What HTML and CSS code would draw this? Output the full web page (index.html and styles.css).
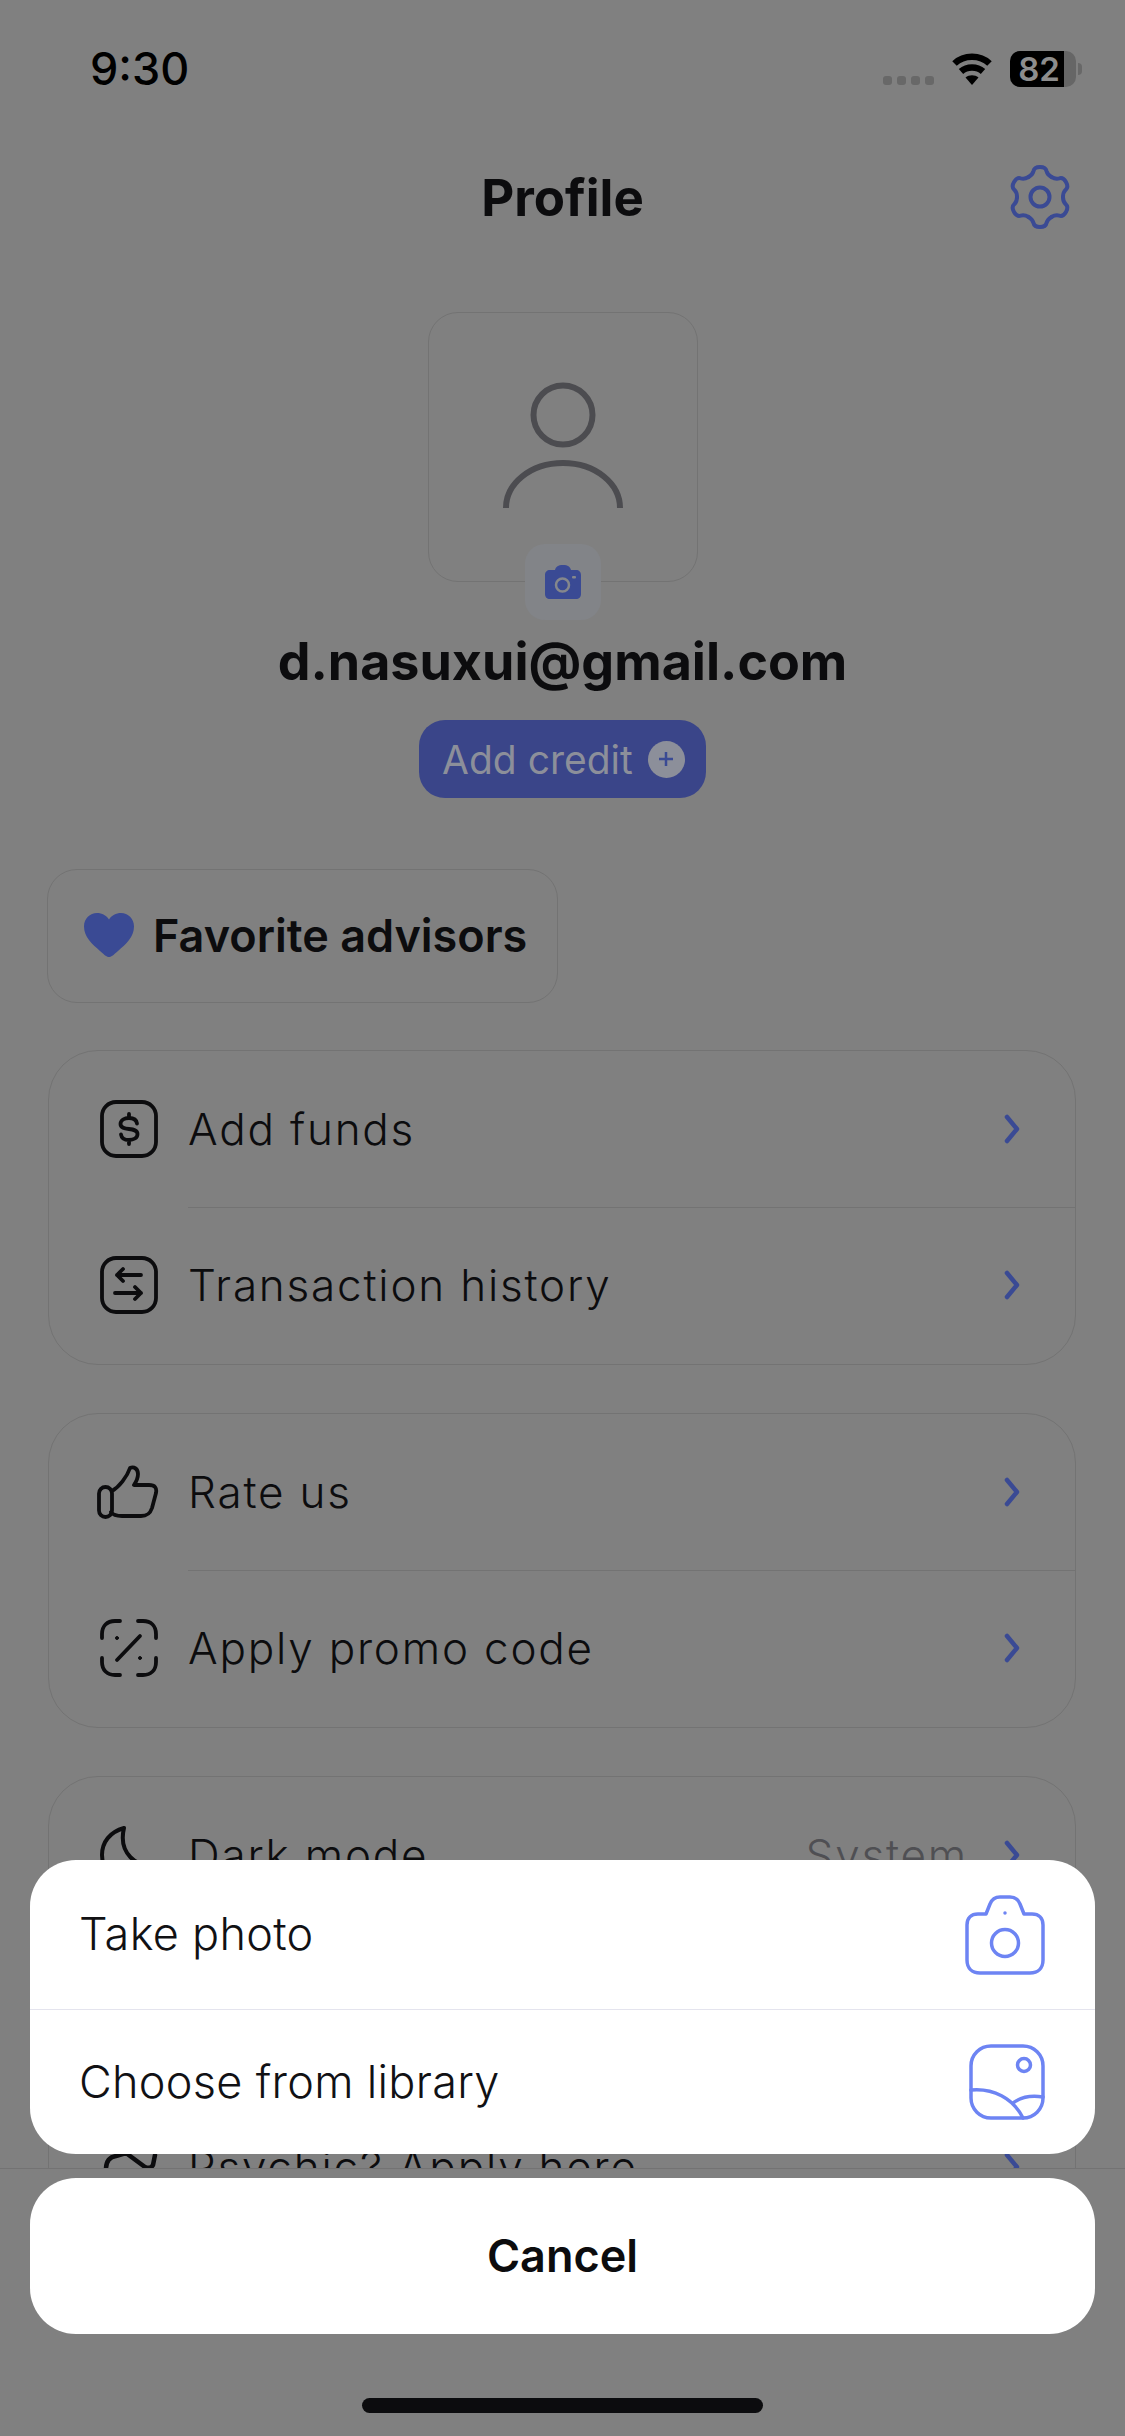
FILE: index.html
```html
<!DOCTYPE html>
<html lang="en">
<head>
    <meta charset="UTF-8">
    <title>Profile</title>
    <link rel="stylesheet" href="styles.css">
</head>
<body>

<div class="screen">
    <div class="main">
        <div class="status">
            <span class="time">9:30</span>
            <div class="status-icons">
                <div class="signal"><i></i><i></i><i></i><i></i></div>
                <svg class="wifi" width="46" height="34" viewBox="0 0 46 34">
                    <path d="M23 34 L16.5 26.5 C20 23.5 26 23.5 29.500 26.500 Z" fill="#000"/>
                    <path d="M12 20.500 C18 15 28 15 34 20.500 M5.500 12.500 C15 3.500 31 3.500 40.500 12.500" fill="none" stroke="#000" stroke-width="6.500"/>
                </svg>
                <div class="battery">
                    <div class="battery-body">
                        <div class="battery-fill"></div>
                        <span>82</span>
                    </div>
                    <div class="battery-nub"></div>
                </div>
            </div>
        </div>

        <div class="header">
            <h1>Profile</h1>
            <svg class="gear" width="64" height="64" viewBox="0 0 64 64" fill="none" stroke="#3a4a94" stroke-width="4" stroke-linecap="round">
                <path id="tooth" d="M20.500 12.100 C24 10.100 25 8 25.500 6 C26 3.500 28 2 32 2 C36 2 38 3.500 38.500 6 C39 8 40 10.100 43.500 12.100"/>
                <use href="#tooth" transform="rotate(60 32 32)"/>
                <use href="#tooth" transform="rotate(120 32 32)"/>
                <use href="#tooth" transform="rotate(180 32 32)"/>
                <use href="#tooth" transform="rotate(240 32 32)"/>
                <use href="#tooth" transform="rotate(300 32 32)"/>
                <circle cx="32" cy="32" r="9.500"/>
            </svg>
        </div>

        <div class="profile">
            <div class="avatar">
                <svg width="126" height="130" viewBox="0 0 126 130" fill="none" stroke="#4c4c50" stroke-width="6">
                    <circle cx="63" cy="35" r="29.500"/>
                    <path d="M6 128 C6 104 30 83 63 83 C96 83 120 104 120 128"/>
                </svg>
                <div class="avatar-badge">
                    <svg width="36" height="34" viewBox="0 0 36 34">
                        <path d="M5 5 H10 C11 1.500 13 0 18 0 C23 0 25 1.500 26 5 H31 C34 5 36 7 36 10 V29 C36 32 34 34 31 34 H5 C2 34 0 32 0 29 V10 C0 7 2 5 5 5 Z" fill="#3a4a94"/>
                        <circle cx="17.500" cy="20" r="6.500" fill="none" stroke="#85878c" stroke-width="2.500"/>
                        <rect x="27" y="11" width="4" height="2.500" rx="1" fill="#85878c"/>
                    </svg>
                </div>
            </div>
            <div class="email">d.nasuxui@gmail.com</div>
            <div class="add-credit">
                <span>Add credit</span>
                <div class="plus">
                    <svg width="16" height="16" viewBox="0 0 16 16" stroke="#3a4a94" stroke-width="2.500"><path d="M8 1 V15 M1 8 H15"/></svg>
                </div>
            </div>
        </div>

        <div class="favorites">
            <svg width="50" height="44" viewBox="0 0 50 44">
                <path d="M25 44 C23 44 21 42.500 16 38 C8 31 0 24 0 13.500 C0 5.500 6 0 13 0 C18 0 22.500 2.500 25 6.500 C27.500 2.500 32 0 37 0 C44 0 50 5.500 50 13.500 C50 24 42 31 34 38 C29 42.500 27 44 25 44 Z" fill="#3a4a94"/>
            </svg>
            <span>Favorite advisors</span>
        </div>

        <div class="group">
            <div class="row">
                <div class="row-icon">
                    <svg width="58" height="58" viewBox="0 0 58 58" fill="none" stroke="#0c0c0e" stroke-width="3.800" stroke-linecap="round">
                        <rect x="2" y="2" width="54" height="54" rx="14"/>
                        <path d="M37 23.500 C36.500 20 33.500 18 29 18 C24.500 18 20.500 20 20.500 24 C20.500 28 24.500 28.500 29 29 C33.500 29.500 37.500 30 37.500 34 C37.500 38 33.500 40 29 40 C24.500 40 21.500 38 21 34.500 M29 14 V18 M29 40 V44"/>
                    </svg>
                </div>
                <span class="row-label">Add funds</span>
                <svg class="chev" width="16" height="30" viewBox="0 0 16 30"><path d="M3 3 L13 15 L3 27" fill="none" stroke="#3a4a94" stroke-width="4.500" stroke-linecap="round" stroke-linejoin="round"/></svg>
            </div>
            <div class="row">
                <div class="row-icon">
                    <svg width="58" height="58" viewBox="0 0 58 58" fill="none" stroke="#0c0c0e" stroke-width="3.800" stroke-linecap="round" stroke-linejoin="round">
                        <rect x="2" y="2" width="54" height="54" rx="14"/>
                        <path d="M41 19 H17 M23 13 L17 19 L23 25 M15 37 H41 M35 31 L41 37 L35 43"/>
                    </svg>
                </div>
                <span class="row-label">Transaction history</span>
                <svg class="chev" width="16" height="30" viewBox="0 0 16 30"><path d="M3 3 L13 15 L3 27" fill="none" stroke="#3a4a94" stroke-width="4.500" stroke-linecap="round" stroke-linejoin="round"/></svg>
            </div>
        </div>

        <div class="group">
            <div class="row">
                <div class="row-icon">
                    <svg class="thumb" width="62" height="54" viewBox="0 0 62 54" fill="none" stroke="#0c0c0e" stroke-width="3.800" stroke-linecap="round" stroke-linejoin="round">
                        <rect x="2" y="22" width="13" height="30" rx="6.500"/>
                        <path d="M15 26 C22 22 30 12 33 3 C37 1 41 4 41 9 C41 13 39 17 37 20 H52 C58 20 60 23 59 28 L55 43 C53 49 50 51 44 51 H25 C20 51 16 50 14 47"/>
                    </svg>
                </div>
                <span class="row-label">Rate us</span>
                <svg class="chev" width="16" height="30" viewBox="0 0 16 30"><path d="M3 3 L13 15 L3 27" fill="none" stroke="#3a4a94" stroke-width="4.500" stroke-linecap="round" stroke-linejoin="round"/></svg>
            </div>
            <div class="row">
                <div class="row-icon">
                    <svg width="58" height="58" viewBox="0 0 58 58" fill="none" stroke="#0c0c0e" stroke-width="3.800" stroke-linecap="round">
                        <path d="M2 19 V15 C2 7 7 2 15 2 H20 M38 2 H43 C51 2 56 7 56 15 V19 M56 39 V43 C56 51 51 56 43 56 H38 M20 56 H15 C7 56 2 51 2 43 V39"/>
                        <path d="M17 41 L40 17"/>
                        <circle cx="17" cy="19" r="1.500" fill="#0c0c0e" stroke-width="1"/>
                        <circle cx="40" cy="39" r="1.500" fill="#0c0c0e" stroke-width="1"/>
                    </svg>
                </div>
                <span class="row-label">Apply promo code</span>
                <svg class="chev" width="16" height="30" viewBox="0 0 16 30"><path d="M3 3 L13 15 L3 27" fill="none" stroke="#3a4a94" stroke-width="4.500" stroke-linecap="round" stroke-linejoin="round"/></svg>
            </div>
        </div>

        <div class="group">
            <div class="row">
                <div class="row-icon">
                    <svg width="58" height="58" viewBox="0 0 58 58" fill="none" stroke="#0c0c0e" stroke-width="4" stroke-linecap="round" stroke-linejoin="round">
                        <path d="M24 2 C10 6 2 16 2 29 C2 45 14 56 29 56 C41 56 51 49 55 38 C37 43 18 27 24 2 Z"/>
                    </svg>
                </div>
                <span class="row-label">Dark mode</span>
                <span class="row-value">System</span>
                <svg class="chev" width="16" height="30" viewBox="0 0 16 30"><path d="M3 3 L13 15 L3 27" fill="none" stroke="#3a4a94" stroke-width="4.500" stroke-linecap="round" stroke-linejoin="round"/></svg>
            </div>
            <div class="row">
                <div class="row-icon"></div>
                <span class="row-label">Notifications</span>
                <svg class="chev" width="16" height="30" viewBox="0 0 16 30"><path d="M3 3 L13 15 L3 27" fill="none" stroke="#3a4a94" stroke-width="4.500" stroke-linecap="round" stroke-linejoin="round"/></svg>
            </div>
            <div class="row">
                <div class="row-icon">
                    <svg width="58" height="52" viewBox="0 0 58 52" fill="none" stroke="#0c0c0e" stroke-width="4.500" stroke-linecap="round" stroke-linejoin="round">
                        <path d="M6 28 C6 20 10 16 16 15 L26 12 L45 26 C49 28 52 26 53 24 L55 14"/>
                    </svg>
                </div>
                <span class="row-label">Psychic? Apply here</span>
                <svg class="chev" width="16" height="30" viewBox="0 0 16 30"><path d="M3 3 L13 15 L3 27" fill="none" stroke="#3a4a94" stroke-width="4.500" stroke-linecap="round" stroke-linejoin="round"/></svg>
            </div>
        </div>
    </div>

    <div class="tabbar">
        <div class="home-bar"></div>
    </div>

    <div class="sheet">
        <div class="sheet-group">
            <div class="sheet-row first">
                <span>Take photo</span>
                <svg width="80" height="80" viewBox="0 0 80 80" fill="none" stroke="#6d84f3" stroke-width="3.500" stroke-linecap="round" stroke-linejoin="round">
                    <path d="M21 19 H13 C6 19 2 23 2 30 V65 C2 73 7 78 15 78 H65 C73 78 78 73 78 65 V30 C78 23 74 19 67 19 H59 L55 9 C53 4 50 2 45 2 H35 C30 2 27 4 25 9 Z"/>
                    <circle cx="40" cy="48" r="13.500"/>
                    <circle cx="40" cy="18" r="1" fill="#6d84f3" stroke-width="1.500"/>
                </svg>
            </div>
            <div class="sheet-row second">
                <span>Choose from library</span>
                <svg width="76" height="76" viewBox="0 0 76 76" fill="none" stroke="#6d84f3" stroke-width="3.500" stroke-linecap="round" stroke-linejoin="round">
                    <rect x="2" y="2" width="72" height="72" rx="20"/>
                    <circle cx="55" cy="21" r="6.500"/>
                    <path d="M2 46 C24 44 44 54 54 74 M44 59 C52 53 62 51 74 53"/>
                </svg>
            </div>
        </div>
        <div class="cancel"><span>Cancel</span></div>
    </div>
</div>

</body>
</html>
```

FILE: styles.css
```css
* {
    box-sizing: border-box;
}

body {
    margin: 0;
    background-color: #808080;
    color: #0c0c0e;
    font-family: Inter, "Liberation Sans", sans-serif;
}

.screen {
    position: relative;
    width: 1125px;
    height: 2436px;
    overflow: hidden;
}

.main {
    height: 2168px;
    overflow: hidden;
}

.status {
    height: 130px;
    padding: 44px 43px 0 90px;
    display: flex;
    justify-content: space-between;
    align-items: flex-start;
}

.time {
    font-size: 45px;
    line-height: 50px;
    font-weight: 500;
    color: #000;
}

.status-icons {
    display: flex;
    align-items: flex-start;
    margin-top: 7px;
}

.signal {
    display: flex;
    gap: 5px;
    margin-top: 25px;
    margin-right: 15px;
}

.signal i {
    width: 9px;
    height: 9px;
    border-radius: 3px;
    background-color: #686868;
}

.wifi {
    margin-right: 15px;
}

.battery {
    display: flex;
    align-items: center;
}

.battery-body {
    position: relative;
    width: 66px;
    height: 36px;
    border-radius: 10px;
    background-color: #666;
    display: flex;
    align-items: center;
    justify-content: center;
}

.battery-fill {
    position: absolute;
    left: 0;
    top: 0;
    bottom: 0;
    width: 82%;
    border-radius: 10px 0 0 10px;
    background-color: #000;
}

.battery-body span {
    position: relative;
    font-size: 33px;
    font-weight: 600;
    color: #8d8d8d;
    margin-left: -8px;
}

.battery-nub {
    width: 4px;
    height: 12px;
    margin-left: 2px;
    border-radius: 0 4px 4px 0;
    background-color: #686868;
}

.header {
    position: relative;
    height: 134px;
    padding-top: 2px;
    display: flex;
    align-items: center;
    justify-content: center;
}

.header h1 {
    margin: 0;
    font-size: 51px;
    font-weight: 700;
    line-height: 60px;
}

.gear {
    position: absolute;
    right: 53px;
    top: 35px;
}

.profile {
    margin-top: 48px;
    display: flex;
    flex-direction: column;
    align-items: center;
}

.avatar {
    position: relative;
    width: 270px;
    height: 270px;
    padding-top: 67px;
    display: flex;
    justify-content: center;
    align-items: flex-start;
    border: 1px solid #737373;
    border-radius: 30px;
}

.avatar-badge {
    position: absolute;
    left: 96px;
    bottom: -39px;
    width: 76px;
    height: 76px;
    border-radius: 20px;
    background-color: #828488;
    display: flex;
    align-items: center;
    justify-content: center;
}

.email {
    margin-top: 50px;
    font-size: 52px;
    line-height: 60px;
    font-weight: 700;
}

.add-credit {
    margin-top: 28px;
    width: 287px;
    height: 78px;
    padding-left: 23px;
    display: flex;
    align-items: center;
    gap: 15px;
    border-radius: 26px;
    background-color: #3a4589;
    color: #8c8f9a;
    font-size: 39px;
}

.plus {
    width: 37px;
    height: 37px;
    border-radius: 50%;
    background-color: #8c8f9a;
    display: flex;
    align-items: center;
    justify-content: center;
}

.favorites {
    margin: 71px 0 47px 47px;
    width: 511px;
    height: 134px;
    padding: 0 0 2px 36px;
    display: flex;
    align-items: center;
    gap: 19px;
    border: 1px solid #737373;
    border-radius: 30px;
    font-size: 45px;
    font-weight: 600;
}

.group {
    margin: 0 49px 48px 48px;
    padding-bottom: 1px;
    border: 1px solid #737373;
    border-radius: 50px;
}

.row {
    position: relative;
    height: 156px;
    padding: 0 55px 0 51px;
    display: flex;
    align-items: center;
    font-size: 44px;
    font-weight: 300;
    letter-spacing: 1.800px;
}

.row + .row::before {
    content: "";
    position: absolute;
    left: 139px;
    right: 0;
    top: 0;
    height: 1px;
    background-color: #737373;
}

.row-icon {
    width: 88px;
    flex-shrink: 0;
    display: flex;
}

.thumb {
    margin-left: -3px;
}

.row-label {
    flex: 1;
}

.row-value {
    margin-right: 36px;
    color: #4f4f53;
}

.tabbar {
    height: 268px;
    padding-bottom: 23px;
    display: flex;
    align-items: flex-end;
    justify-content: center;
    border-top: 1px solid #737373;
}

.home-bar {
    width: 401px;
    height: 15px;
    border-radius: 8px;
    background-color: #0c0c0e;
}

/* action sheet on top of the dimmed page */
.sheet {
    position: absolute;
    left: 30px;
    right: 30px;
    bottom: 102px;
    display: flex;
    flex-direction: column;
    gap: 24px;
}

.sheet-group {
    border-radius: 46px;
    background-color: #fff;
    color: #111114;
    font-size: 45px;
    font-weight: 300;
    letter-spacing: 0.300px;
}

.sheet-row {
    padding: 0 50px 0 49px;
    display: flex;
    align-items: center;
    justify-content: space-between;
}

.sheet-row span {
    margin-bottom: 2px;
}

.sheet-row.first {
    height: 150px;
    border-bottom: 1px solid #e4e4ee;
}

.sheet-row.second {
    height: 144px;
}

.cancel {
    height: 156px;
    padding-bottom: 2px;
    border-radius: 46px;
    background-color: #fff;
    display: flex;
    align-items: center;
    justify-content: center;
    font-size: 45px;
    font-weight: 600;
}
```
